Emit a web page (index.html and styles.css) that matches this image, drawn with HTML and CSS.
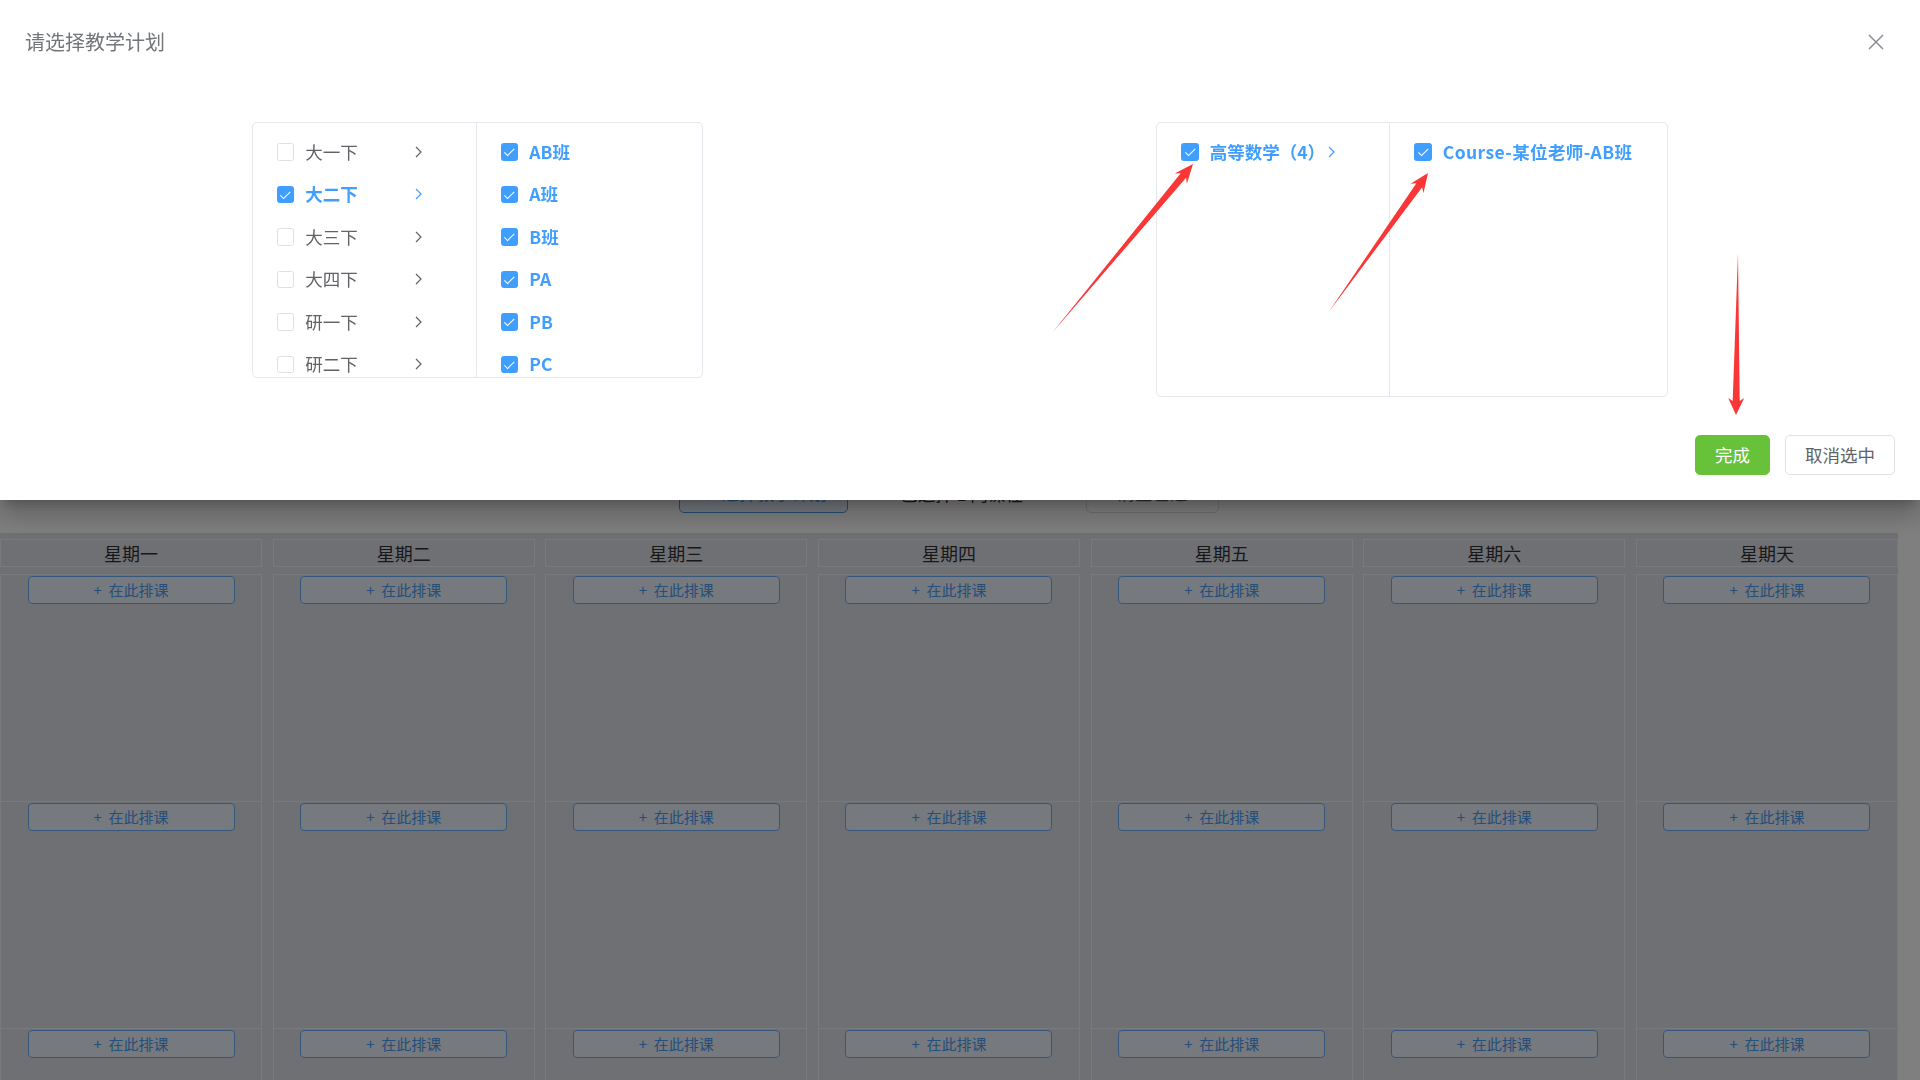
FILE: index.html
```html
<!DOCTYPE html>
<html lang="zh-CN">
<head>
<meta charset="utf-8">
<title>请选择教学计划</title>
<link rel="stylesheet" href="styles.css">
</head>
<body>
<div class="page">
  <div class="toolbar">
    <button class="tb-btn tb-primary">⊕ 选择教学计划</button>
    <span class="tb-text">已选择 1 门课程</span>
    <button class="tb-btn tb-default">清空已选</button>
  </div>
  <div class="schedule">
    <div class="day"><div class="day-head">星期一</div><div class="slot"><button class="add">+&nbsp; 在此排课</button></div><div class="slot"><button class="add">+&nbsp; 在此排课</button></div><div class="slot"><button class="add">+&nbsp; 在此排课</button></div></div>
    <div class="day"><div class="day-head">星期二</div><div class="slot"><button class="add">+&nbsp; 在此排课</button></div><div class="slot"><button class="add">+&nbsp; 在此排课</button></div><div class="slot"><button class="add">+&nbsp; 在此排课</button></div></div>
    <div class="day"><div class="day-head">星期三</div><div class="slot"><button class="add">+&nbsp; 在此排课</button></div><div class="slot"><button class="add">+&nbsp; 在此排课</button></div><div class="slot"><button class="add">+&nbsp; 在此排课</button></div></div>
    <div class="day"><div class="day-head">星期四</div><div class="slot"><button class="add">+&nbsp; 在此排课</button></div><div class="slot"><button class="add">+&nbsp; 在此排课</button></div><div class="slot"><button class="add">+&nbsp; 在此排课</button></div></div>
    <div class="day"><div class="day-head">星期五</div><div class="slot"><button class="add">+&nbsp; 在此排课</button></div><div class="slot"><button class="add">+&nbsp; 在此排课</button></div><div class="slot"><button class="add">+&nbsp; 在此排课</button></div></div>
    <div class="day"><div class="day-head">星期六</div><div class="slot"><button class="add">+&nbsp; 在此排课</button></div><div class="slot"><button class="add">+&nbsp; 在此排课</button></div><div class="slot"><button class="add">+&nbsp; 在此排课</button></div></div>
    <div class="day"><div class="day-head">星期天</div><div class="slot"><button class="add">+&nbsp; 在此排课</button></div><div class="slot"><button class="add">+&nbsp; 在此排课</button></div><div class="slot"><button class="add">+&nbsp; 在此排课</button></div></div>
  </div>
</div>

<div class="mask"></div>

<div class="drawer">
  <header class="drawer-head">
    <span class="drawer-title">请选择教学计划</span>
    <button class="close" aria-label="关闭">
      <svg width="16" height="16" viewBox="0 0 16 16"><path d="M1 1 L15 15 M15 1 L1 15" stroke="#8a8d93" stroke-width="1.5" fill="none"/></svg>
    </button>
  </header>
  <div class="drawer-body">
    <div class="panels">
      <div class="cascader cascader-left">
        <ul class="menu menu-grade">
          <li class="node"><span class="cb"></span><span class="label">大一下</span><span class="arrow"><svg width="7" height="12" viewBox="0 0 7 12"><path d="M1 1 L6 6 L1 11" stroke="currentColor" stroke-width="1.2" fill="none"/></svg></span></li>
          <li class="node active"><span class="cb checked"></span><span class="label">大二下</span><span class="arrow"><svg width="7" height="12" viewBox="0 0 7 12"><path d="M1 1 L6 6 L1 11" stroke="currentColor" stroke-width="1.2" fill="none"/></svg></span></li>
          <li class="node"><span class="cb"></span><span class="label">大三下</span><span class="arrow"><svg width="7" height="12" viewBox="0 0 7 12"><path d="M1 1 L6 6 L1 11" stroke="currentColor" stroke-width="1.2" fill="none"/></svg></span></li>
          <li class="node"><span class="cb"></span><span class="label">大四下</span><span class="arrow"><svg width="7" height="12" viewBox="0 0 7 12"><path d="M1 1 L6 6 L1 11" stroke="currentColor" stroke-width="1.2" fill="none"/></svg></span></li>
          <li class="node"><span class="cb"></span><span class="label">研一下</span><span class="arrow"><svg width="7" height="12" viewBox="0 0 7 12"><path d="M1 1 L6 6 L1 11" stroke="currentColor" stroke-width="1.2" fill="none"/></svg></span></li>
          <li class="node"><span class="cb"></span><span class="label">研二下</span><span class="arrow"><svg width="7" height="12" viewBox="0 0 7 12"><path d="M1 1 L6 6 L1 11" stroke="currentColor" stroke-width="1.2" fill="none"/></svg></span></li>
        </ul>
        <ul class="menu menu-class">
          <li class="node active"><span class="cb checked"></span><span class="label">AB班</span></li>
          <li class="node active"><span class="cb checked"></span><span class="label">A班</span></li>
          <li class="node active"><span class="cb checked"></span><span class="label">B班</span></li>
          <li class="node active"><span class="cb checked"></span><span class="label">PA</span></li>
          <li class="node active"><span class="cb checked"></span><span class="label">PB</span></li>
          <li class="node active"><span class="cb checked"></span><span class="label">PC</span></li>
        </ul>
      </div>
      <div class="cascader cascader-right">
        <ul class="menu menu-course">
          <li class="node active"><span class="cb checked"></span><span class="label">高等数学（4）</span><span class="arrow"><svg width="7" height="12" viewBox="0 0 7 12"><path d="M1 1 L6 6 L1 11" stroke="currentColor" stroke-width="1.2" fill="none"/></svg></span></li>
        </ul>
        <ul class="menu menu-teacher">
          <li class="node active"><span class="cb checked"></span><span class="label label-wide">Course-某位老师-AB班</span></li>
        </ul>
      </div>
    </div>
    <div class="actions">
      <button class="btn btn-success">完成</button>
      <button class="btn btn-default">取消选中</button>
    </div>
  </div>
  <svg class="annot" width="1920" height="500" viewBox="0 0 1920 500">
    <polygon points="1052,333 1186.1,177.7 1186.9,183.7 1193,164 1174.7,173.5 1180.7,173.3" fill="#fa3636"/>
    <polygon points="1328,313 1422.1,187.2 1423.5,193.1 1428,173 1410.5,183.8 1416.4,183.2" fill="#fa3636"/>
    <polygon points="1738,253 1739.7,401 1744.2,398 1736,415 1728.2,398 1732.7,401" fill="#fa3636"/>
  </svg>
</div>
</body>
</html>
```

FILE: styles.css
```css
* {
  box-sizing: border-box;
  margin: 0;
  padding: 0;
}

html, body {
  width: 1920px;
  height: 1080px;
  overflow: hidden;
}

body {
  font-family: "Noto Sans CJK SC", "Microsoft YaHei", sans-serif;
  background: #ffffff;
  color: #606266;
}

button {
  font-family: inherit;
  cursor: pointer;
}

/* ---------- underlying page ---------- */
.page {
  width: 1898px;
  height: 1080px;
  overflow: hidden;
  padding-top: 473px;
}

.toolbar {
  display: flex;
  justify-content: center;
  align-items: center;
  height: 40px;
}

.tb-btn {
  height: 40px;
  border-radius: 5px;
  font-size: 17.5px;
  line-height: 38px;
}

.tb-primary {
  width: 169px;
  border: 1px solid #4a9cf0;
  background: #ecf5ff;
  color: #409eff;
}

.tb-text {
  width: 169px;
  margin: 0 40px 0 29px;
  font-size: 17.5px;
  color: #303133;
  text-align: center;
}

.tb-default {
  width: 133px;
  border: 1px solid #dcdfe6;
  background: #ffffff;
  color: #606266;
}

.schedule {
  display: grid;
  grid-template-columns: repeat(7, 1fr);
  column-gap: 10.67px;
  margin-top: 20px;
  padding-top: 6px;
  height: 547px;
  overflow: hidden;
  background: #dfe1e8;
}

.day {
  display: flex;
  flex-direction: column;
}

.day-head {
  height: 28px;
  flex: none;
  border: 1px solid #f4f5f8;
  margin-bottom: 7px;
  text-align: center;
  font-size: 18px;
  line-height: 26px;
  color: #303133;
}

.slot {
  height: 227px;
  flex: none;
  border: 1px solid #f4f5f8;
  border-bottom: 0;
  padding-top: 1px;
  display: flex;
  justify-content: center;
  align-items: flex-start;
}

.add {
  width: 207px;
  height: 28px;
  border: 1px solid #6aaefc;
  border-radius: 4px;
  background: #edf3fc;
  color: #4a9ef5;
  font-size: 15px;
  line-height: 26px;
}

/* ---------- mask ---------- */
.mask {
  position: fixed;
  inset: 0;
  background: rgba(0, 0, 0, 0.5);
  z-index: 5;
}

/* ---------- drawer ---------- */
.drawer {
  position: fixed;
  top: 0;
  left: 0;
  width: 1920px;
  height: 500px;
  background: #ffffff;
  z-index: 10;
  box-shadow: 0 8px 10px -5px rgba(0, 0, 0, .2), 0 16px 24px 2px rgba(0, 0, 0, .14), 0 6px 30px 5px rgba(0, 0, 0, .12);
}

.drawer-head {
  display: flex;
  justify-content: space-between;
  align-items: center;
  padding: 25px 25px 0 25px;
  height: 59px;
}

.drawer-title {
  font-size: 20px;
  line-height: 34px;
  color: #72767b;
}

.close {
  width: 25px;
  height: 25px;
  margin-right: 7px;
  border: 0;
  background: transparent;
  display: flex;
  align-items: center;
  justify-content: center;
}

.drawer-body {
  padding: 0 25px;
}

.panels {
  display: flex;
  justify-content: space-around;
  align-items: flex-start;
  margin-top: 63px;
}

.cascader {
  display: flex;
  border: 1px solid #e4e7ed;
  border-radius: 5px;
  overflow: hidden;
  background: #ffffff;
}

.cascader-left {
  height: 256px;
}

.cascader-right {
  height: 275px;
}

.menu {
  list-style: none;
  padding: 7.5px 0;
  height: 100%;
  overflow: hidden;
}

.menu-grade {
  width: 224px;
  border-right: 1px solid #e4e7ed;
}

.menu-class {
  width: 225px;
}

.menu-course {
  width: 233px;
  border-right: 1px solid #e4e7ed;
}

.menu-teacher {
  width: 277px;
}

.node {
  position: relative;
  display: flex;
  align-items: center;
  height: 42.5px;
  padding: 0 37.5px 0 24px;
  font-size: 17.5px;
  color: #606266;
  white-space: nowrap;
}

.node.active {
  color: #409eff;
  font-weight: 700;
}

.label {
  padding-left: 11px;
  line-height: 24px;
}

.label-wide {
  letter-spacing: 0.4px;
}

.arrow {
  position: absolute;
  right: 54px;
  top: 50%;
  margin-top: -6px;
  width: 7px;
  height: 12px;
  display: block;
  color: #606266;
}

.arrow svg {
  display: block;
}

.node.active .arrow {
  color: #409eff;
}

.cb {
  position: relative;
  flex: none;
  width: 17.5px;
  height: 17.5px;
  border: 1px solid #dcdfe6;
  border-radius: 2.5px;
  background: #ffffff;
}

.cb.checked {
  background: #409eff;
  border-color: #409eff;
}

.cb.checked::after {
  content: "";
  position: absolute;
  left: 5.5px;
  top: 2px;
  width: 4px;
  height: 8.5px;
  border: 1.25px solid #ffffff;
  border-left: 0;
  border-top: 0;
  transform: rotate(45deg);
}

.actions {
  display: flex;
  justify-content: flex-end;
  gap: 15px;
  margin-top: 38px;
}

.btn {
  height: 40px;
  padding: 0;
  border-radius: 5px;
  font-size: 17.5px;
  line-height: 38px;
  text-align: center;
}

.btn-success {
  width: 75px;
  border: 1px solid #67c23a;
  background: #67c23a;
  color: #ffffff;
}

.btn-default {
  width: 110px;
  border: 1px solid #dcdfe6;
  background: #ffffff;
  color: #606266;
}

.annot {
  position: absolute;
  top: 0;
  left: 0;
  pointer-events: none;
}
```
